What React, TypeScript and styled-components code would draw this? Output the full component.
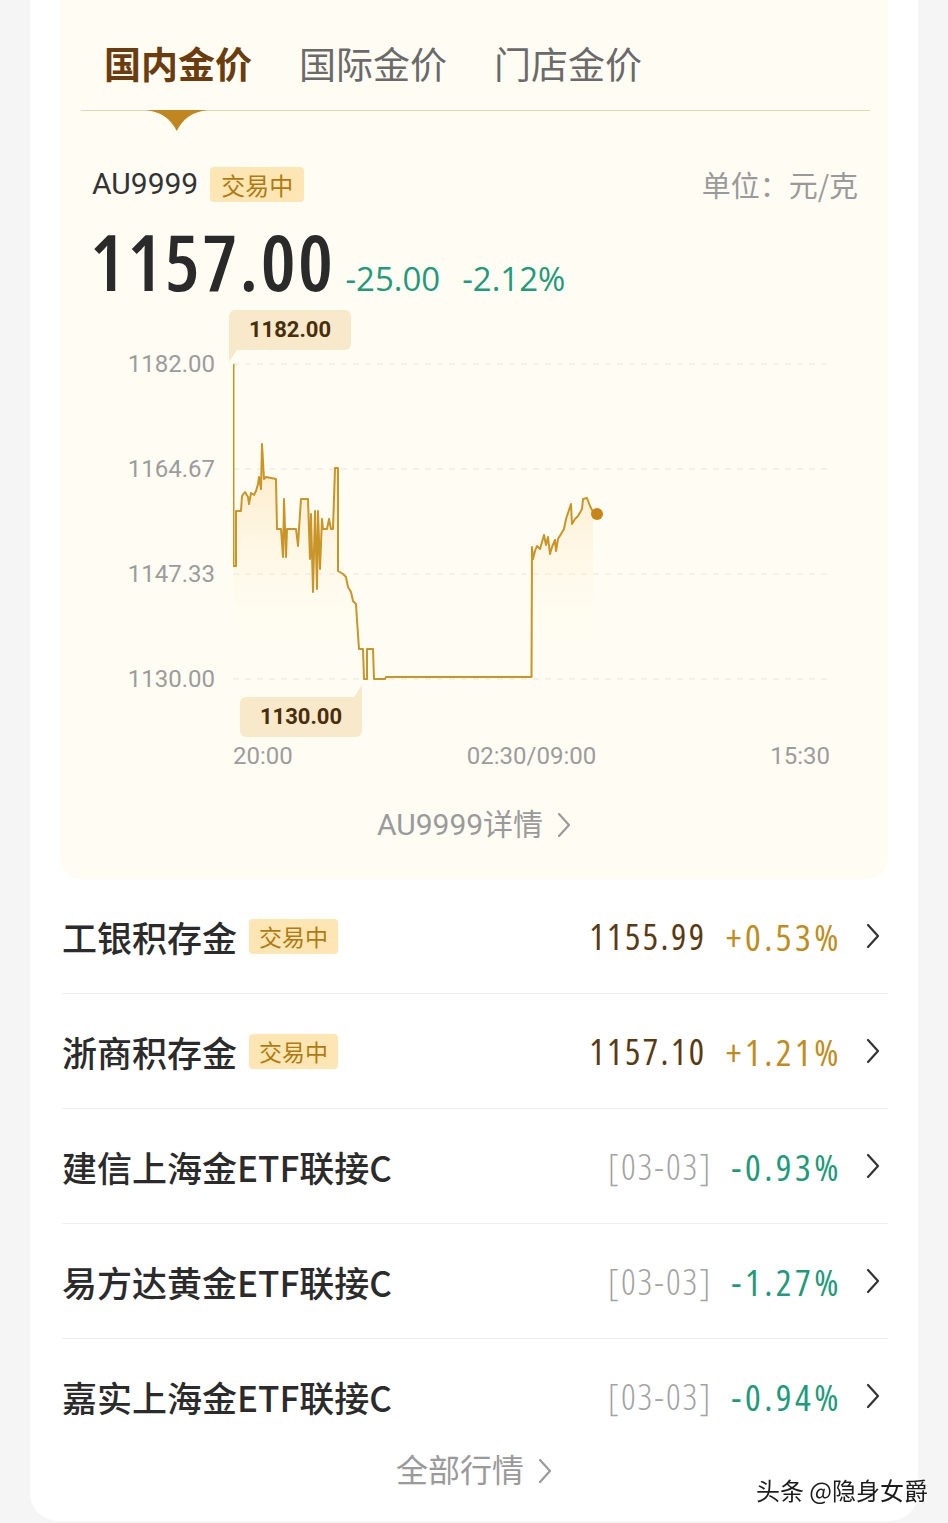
import { createGlobalStyle, styled } from 'styled-components'

const NUM_FONT = `"Open Sans", Roboto, sans-serif`
const CJK_FONT = `"Noto Sans CJK SC", sans-serif`

const GlobalStyle = createGlobalStyle`
  html, body {
    margin: 0;
    padding: 0;
    background: #f5f5f5;
  }
  body {
    font-family: Roboto, "Noto Sans CJK SC", sans-serif;
    -webkit-font-smoothing: antialiased;
  }
`

const Page = styled.div`
  height: 1523px;
  overflow: hidden;
  padding: 0 30px;
  box-sizing: border-box;
`

const Card = styled.div`
  background: #fff;
  border-radius: 0 0 28px 28px;
  padding: 0 30px 32px;
`

const Panel = styled.section`
  background: #fffdf3;
  border-radius: 0 0 20px 20px;
  padding-bottom: 34px;
`

const TabBar = styled.nav`
  display: flex;
  align-items: center;
  gap: 47px;
  height: 94px;
  padding: 16px 0 0 23px;
  margin: 0 18px 0 21px;
  border-bottom: 1px solid #e2d8ae;
`

const Tab = styled.span<{ $active?: boolean }>`
  position: relative;
  font-family: ${CJK_FONT};
  font-size: 37px;
  line-height: 44px;
  font-weight: ${({ $active }) => ($active ? 700 : 400)};
  color: ${({ $active }) => ($active ? '#6b3d0e' : '#6a6a6a')};
`

const TabMarker = styled.svg`
  position: absolute;
  top: calc(100% + 25px);
  left: 50%;
  transform: translateX(-52%);
  display: block;
`

const InfoRow = styled.div`
  display: flex;
  align-items: center;
  justify-content: space-between;
  height: 36px;
  margin-top: 55px;
  padding: 0 30px 0 32px;
`

const Symbol = styled.div`
  display: flex;
  align-items: center;
  font-size: 30px;
  line-height: 36px;
  color: #333;
`

const Badge = styled.span<{ $size?: number }>`
  margin-left: 12px;
  padding: 0 ${({ $size }) => ($size ? 10 : 11)}px;
  height: 35px;
  line-height: 35px;
  border-radius: 4px;
  background: #fde6b3;
  color: #b07a12;
  font-family: ${CJK_FONT};
  font-size: ${({ $size }) => $size ?? 24}px;
`

const Unit = styled.span`
  font-family: ${CJK_FONT};
  font-size: 29px;
  color: #9a9a9a;
`

const PriceRow = styled.div`
  display: flex;
  align-items: baseline;
  margin-top: 19px;
  padding-left: 30px;
`

const BigPrice = styled.span`
  font-family: ${NUM_FONT};
  font-stretch: condensed;
  font-size: 78px;
  line-height: 80px;
  font-weight: 600;
  letter-spacing: 2.5px;
  color: #2a2a2a;
`

const Change = styled.span<{ $gap: number }>`
  margin-left: ${({ $gap }) => $gap}px;
  font-family: ${NUM_FONT};
  font-size: 33px;
  color: #1f9a7a;
`

const ChartBox = styled.div`
  position: relative;
  display: grid;
  grid-template-columns: 155px 597px;
  column-gap: 18px;
  padding-top: 48px;
`

const YAxis = styled.div`
  display: flex;
  flex-direction: column;
  justify-content: space-between;
  height: 345px;
  text-align: right;
  font-size: 24px;
  line-height: 30px;
  color: #9c9c9c;
`

const Plot = styled.svg`
  display: block;
`

const XAxis = styled.div`
  grid-column: 2;
  display: flex;
  justify-content: space-between;
  margin-top: 47px;
  font-size: 24px;
  line-height: 30px;
  color: #9c9c9c;
`

const Tip = styled.div<{ $low?: boolean; $left: number; $top: number }>`
  position: absolute;
  left: ${({ $left }) => $left}px;
  top: ${({ $top }) => $top}px;
  width: 122px;
  height: 40px;
  line-height: 40px;
  text-align: center;
  background: #f8e9cb;
  color: #4a2d0b;
  font-size: 22px;
  font-weight: 700;
  border-radius: ${({ $low }) => ($low ? '6px 0 6px 6px' : '6px 6px 6px 0')};

  &::after {
    content: '';
    position: absolute;
    width: 0;
    height: 0;
    ${({ $low }) =>
      $low
        ? `right: 0; bottom: 100%; border-bottom: 12px solid #f8e9cb; border-left: 8px solid transparent;`
        : `left: 0; top: 100%; border-top: 12px solid #f8e9cb; border-right: 8px solid transparent;`}
  }
`

const LinkLine = styled.div<{ $size: number; $height: number }>`
  display: flex;
  align-items: center;
  justify-content: center;
  gap: 14px;
  font-family: Roboto, ${CJK_FONT};
  font-size: ${({ $size }) => $size}px;
  line-height: ${({ $height }) => $height}px;
  color: #9a9a9a;
`

const DetailLink = styled(LinkLine)`
  margin-top: 34px;
`

const List = styled.ul`
  list-style: none;
  margin: 0;
  padding: 0 0 0 2px;
`

const Row = styled.li`
  display: flex;
  align-items: center;
  height: 114px;
  border-bottom: 1px solid #eeeeee;

  &:last-child {
    border-bottom: none;
  }
`

const Name = styled.span`
  font-family: ${CJK_FONT};
  font-size: 35px;
  font-weight: 500;
  color: #2b2b2b;
`

const Quote = styled.div`
  display: flex;
  align-items: center;
  margin-left: auto;
  padding-right: 8px;
  color: #333;
`

const QuoteNum = styled.span`
  font-family: ${NUM_FONT};
  font-stretch: condensed;
  font-size: 36px;
  letter-spacing: 2.5px;
`

const Price = styled(QuoteNum)`
  color: #5a3a12;
`

const DateTag = styled(QuoteNum)`
  font-weight: 300;
  letter-spacing: 2px;
  color: #a3a3a3;
`

const Pct = styled(QuoteNum)<{ $up: boolean }>`
  margin-left: 19px;
  margin-right: 24px;
  font-size: 37px;
  letter-spacing: 3.5px;
  color: ${({ $up }) => ($up ? '#bf8d1e' : '#1f9a7a')};
`

const Watermark = styled.div`
  position: fixed;
  right: 20px;
  bottom: 16px;
  font-family: ${CJK_FONT};
  font-size: 24px;
  color: #1c1c1c;
  text-shadow: 0 0 2px #fff, 0 0 3px #fff;
`

function Chevron({ w = 14, h = 26 }: { w?: number; h?: number }) {
  return (
    <svg width={w} height={h} viewBox="0 0 14 26" fill="none">
      <polyline points="2,2 12,13 2,24" stroke="currentColor" strokeWidth="2.2" strokeLinecap="round" strokeLinejoin="round" />
    </svg>
  )
}

// intraday line, plot-local coords (597 x 345)
const LINE: [number, number][] = [
  [0.5, 15], [0.5, 217], [3, 217], [3, 162], [8, 162], [9, 147], [12, 143], [15, 148], [16, 155], [18, 144],
  [21, 146], [23, 142], [25, 135], [26, 128], [28, 140], [29, 95], [31, 130], [33, 128], [43, 130], [44, 180],
  [48, 180], [50, 208], [51, 150], [53, 208], [54, 180], [63, 180], [65, 197], [66, 180], [68, 150], [75, 150],
  [77, 210], [78, 165], [80, 243], [82, 162], [84, 240], [85, 162], [87, 220], [89, 170], [90, 180], [94, 180],
  [96, 170], [98, 180], [100, 180], [102, 119], [105, 119], [105, 222], [110, 225], [113, 228], [115, 238],
  [118, 243], [120, 252], [123, 255], [124, 271], [126, 300], [130, 300], [131, 330], [134, 330], [134, 300],
  [140, 300], [141, 330], [152, 330], [153, 328], [298.5, 328], [299, 198], [300, 210], [302, 202], [304, 197],
  [307, 200], [311, 186], [313, 196], [315, 188], [317, 205], [319, 198], [322, 191], [323, 202], [325, 190],
  [328, 185], [331, 180], [333, 170], [338, 155], [339, 175], [342, 170], [345, 167], [349, 160], [350, 150],
  [354, 149], [357, 157], [360, 163],
]

const GRID = [15, 120, 225, 330]

function Chart() {
  const line = 'M' + LINE.map(([x, y]) => `${x},${y}`).join(' L')
  const last = LINE[LINE.length - 1]
  const area = `${line} L${last[0]},330 L0.5,330 Z`
  return (
    <Plot width={597} height={345} viewBox="0 0 597 345">
      <defs>
        <linearGradient id="goldFill" x1="0" y1="95" x2="0" y2="300" gradientUnits="userSpaceOnUse">
          <stop offset="0" stopColor="#f6cd82" stopOpacity="0.45" />
          <stop offset="1" stopColor="#fff6e2" stopOpacity="0" />
        </linearGradient>
      </defs>
      {GRID.map((y) => (
        <line key={y} x1="0" x2="597" y1={y} y2={y} stroke="#ebe6d5" strokeWidth="1" strokeDasharray="6 6" />
      ))}
      <path d={area} fill="url(#goldFill)" />
      <path d={line} fill="none" stroke="#c99526" strokeWidth="2" strokeLinejoin="round" />
      <circle cx={364} cy={165} r={6} fill="#c8861a" />
    </Plot>
  )
}

const ROWS = [
  { name: '工银积存金', live: true, price: '1155.99', pct: '+0.53%' },
  { name: '浙商积存金', live: true, price: '1157.10', pct: '+1.21%' },
  { name: '建信上海金ETF联接C', date: '[03-03]', pct: '-0.93%' },
  { name: '易方达黄金ETF联接C', date: '[03-03]', pct: '-1.27%' },
  { name: '嘉实上海金ETF联接C', date: '[03-03]', pct: '-0.94%' },
]

export default function App() {
  return (
    <Page>
      <GlobalStyle />
      <Card>
        <Panel>
          <TabBar>
            <Tab $active>
              国内金价
              <TabMarker width="62" height="21" viewBox="0 0 62 21">
                <path d="M0 0 H62 C46 2 37 9 31 21 C25 9 16 2 0 0 Z" fill="#c08620" />
              </TabMarker>
            </Tab>
            <Tab>国际金价</Tab>
            <Tab>门店金价</Tab>
          </TabBar>

          <InfoRow>
            <Symbol>
              AU9999
              <Badge>交易中</Badge>
            </Symbol>
            <Unit>单位：元/克</Unit>
          </InfoRow>

          <PriceRow>
            <BigPrice>1157.00</BigPrice>
            <Change $gap={10}>-25.00</Change>
            <Change $gap={22}>-2.12%</Change>
          </PriceRow>

          <ChartBox>
            <YAxis>
              <span>1182.00</span>
              <span>1164.67</span>
              <span>1147.33</span>
              <span>1130.00</span>
            </YAxis>
            <Chart />
            <XAxis>
              <span>20:00</span>
              <span>02:30/09:00</span>
              <span>15:30</span>
            </XAxis>
            <Tip $left={169} $top={9}>1182.00</Tip>
            <Tip $low $left={180} $top={396}>1130.00</Tip>
          </ChartBox>

          <DetailLink $size={30} $height={40}>
            AU9999详情
            <Chevron />
          </DetailLink>
        </Panel>

        <List>
          {ROWS.map((r) => (
            <Row key={r.name}>
              <Name>{r.name}</Name>
              {r.live && <Badge $size={23}>交易中</Badge>}
              <Quote>
                {r.price ? <Price>{r.price}</Price> : <DateTag>{r.date}</DateTag>}
                <Pct $up={r.pct.startsWith('+')}>{r.pct}</Pct>
                <Chevron />
              </Quote>
            </Row>
          ))}
        </List>

        <LinkLine $size={32} $height={36}>
          全部行情
          <Chevron />
        </LinkLine>
      </Card>
      <Watermark>头条 @隐身女爵</Watermark>
    </Page>
  )
}
